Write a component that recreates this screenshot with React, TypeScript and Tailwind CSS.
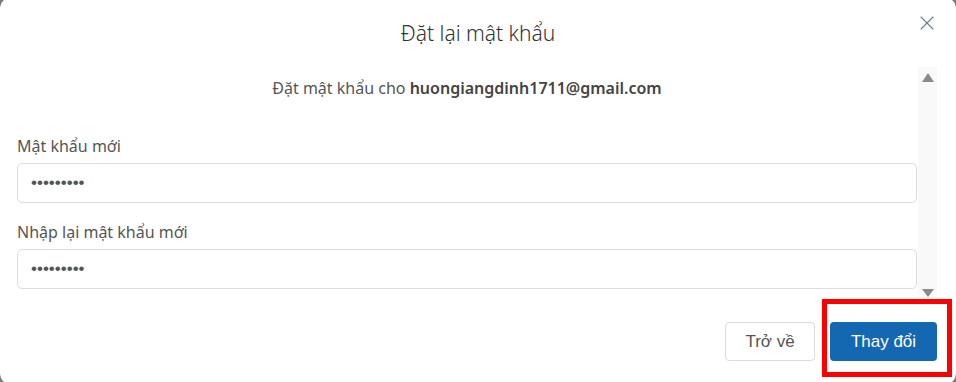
import { X } from "lucide-react";

const font = { fontFamily: '"Segoe UI", "Noto Sans", "Open Sans", sans-serif' };

function Field({ label }: { label: string }) {
  return (
    <div className="flex flex-col">
      <label className="text-[16px] leading-[22px] text-[#555]">{label}</label>
      <input
        type="password"
        readOnly
        defaultValue="123456789"
        className="mt-[6px] h-[40px] w-full rounded-[5px] border border-[#dadde2] bg-white px-[13px] text-[17px] text-[#555] outline-none"
        style={{ fontFamily: '"Liberation Sans", Arial, sans-serif' }}
      />
    </div>
  );
}

export default function App() {
  return (
    <div className="h-[382px] w-[956px] overflow-hidden bg-[#7b7b7b]" style={font}>
      <div className="relative -mt-[3px] flex h-[388px] w-[956px] flex-col rounded-[12px] bg-white">
        {/* header */}
        <div className="flex h-[70px] shrink-0 items-center justify-center pt-[3px]">
          <h1 className="text-[21px] font-light text-[#333]">Đặt lại mật khẩu</h1>
          <button className="absolute right-[17px] top-[14px] text-[#6f7d8c]">
            <X size={24} strokeWidth={1.1} />
          </button>
        </div>

        {/* body */}
        <div className="flex h-[231px] shrink-0">
          <div className="flex flex-1 flex-col pl-[17px] pr-[1px]">
            <p className="mt-[9px] text-center text-[16px] text-[#555]">
              Đặt mật khẩu cho <span className="font-semibold text-[#444]">huongiangdinh1711@gmail.com</span>
            </p>
            <div className="mt-[35px] flex flex-col gap-[18px]">
              <Field label="Mật khẩu mới" />
              <Field label="Nhập lại mật khẩu mới" />
            </div>
          </div>
          <div className="flex w-[19px] flex-col items-center justify-between bg-[#f9f9f9] pb-[1px] pt-[6px]">
            <span className="h-0 w-0 border-x-[6.5px] border-b-[9px] border-x-transparent border-b-[#8a8a8a]" />
            <span className="h-0 w-0 border-x-[6.5px] border-t-[8px] border-x-transparent border-t-[#8a8a8a]" />
          </div>
          <div className="w-[19px]" />
        </div>

        {/* footer */}
        <div
          className="flex justify-end gap-[15px] pr-[19px] pt-[24px]"
          style={{ fontFamily: '"Liberation Sans", Arial, sans-serif' }}
        >
          <button className="h-[39px] w-[90px] rounded-[4px] border border-[#dcdcdc] bg-white text-[17px] text-[#555]">
            Trở về
          </button>
          <button className="h-[39px] w-[107px] rounded-[4px] bg-[#1467b1] text-[17px] text-white">
            Thay đổi
          </button>
        </div>

        {/* highlight */}
        <div className="pointer-events-none absolute left-[822px] top-[302px] h-[78px] w-[130px] border-[5px] border-[#ff0000]" />
      </div>
    </div>
  );
}
